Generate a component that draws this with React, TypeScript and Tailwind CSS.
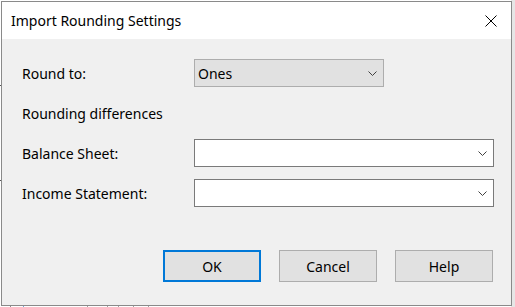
import React from "react";

const Chevron = () => (
  <svg width="9" height="5" viewBox="0 0 9 5" className="block">
    <path d="M0.5 0.5 L4.5 4.5 L8.5 0.5" fill="none" stroke="#404040" strokeWidth="1" />
  </svg>
);

export default function App() {
  const font = { fontFamily: '"Noto Sans", "Open Sans", sans-serif' };
  return (
    <div className="relative w-[515px] h-[307px] overflow-hidden bg-white" style={font}>
      {/* background app bits */}
      <div className="absolute left-0 top-[300px] w-[515px] h-[7px] bg-white">
        <div className="absolute left-[10px] top-0 w-px h-[7px] bg-[#8a8a8a]" />
        <div className="absolute left-[23px] top-0 w-px h-[7px] bg-[#6fa8dc]" />
        <div className="absolute left-[87px] top-0 w-px h-[7px] bg-[#a0a0a0]" />
        <div className="absolute left-[107px] top-0 w-px h-[7px] bg-[#a0a0a0]" />
        <div className="absolute left-[118px] top-0 w-px h-[7px] bg-[#a0a0a0]" />
        <div className="absolute left-[133px] top-0 w-px h-[7px] bg-[#a0a0a0]" />
        <div className="absolute left-[148px] top-0 w-px h-[7px] bg-[#a0a0a0]" />
      </div>
      <div className="absolute left-[511px] top-0 w-[4px] h-[307px] bg-[#e6e6e6]" />
      <div className="absolute left-0 top-[85px] w-[2px] h-px bg-[#555]" />
      <div className="absolute left-0 top-[180px] w-[2px] h-px bg-[#555]" />

      {/* dialog window */}
      <div className="relative ml-[1px] mt-[1px] w-[511px] h-[305px] border border-[#8a8a8a] bg-[#f0f0f0] flex flex-col">
        {/* title bar */}
        <div className="h-[37px] bg-white flex items-center justify-between pl-[9px] pr-[14px] shrink-0">
          <span className="text-[14px] text-black leading-none">Import Rounding Settings</span>
          <svg width="12" height="12" viewBox="0 0 12 12" className="block">
            <path d="M0.5 0.5 L11.5 11.5 M11.5 0.5 L0.5 11.5" stroke="#000" strokeWidth="1" />
          </svg>
        </div>

        {/* body */}
        <div className="flex flex-col pl-[20px] pr-[15px] pt-[20px] text-[14px] text-black">
          <div className="flex flex-col gap-[12px]">
            <div className="flex items-center h-[28px]">
              <div className="w-[172px]">Round to:</div>
              <div className="w-[190px] h-[28px] bg-[#e1e1e1] border border-[#adadad] flex items-center justify-between pl-[3px] pr-[6px]">
                <span>Ones</span>
                <Chevron />
              </div>
            </div>
            <div className="flex items-center h-[28px]">
              <div>Rounding differences</div>
            </div>
            <div className="flex items-center h-[28px]">
              <div className="w-[172px]">Balance Sheet:</div>
              <div className="w-[300px] h-[28px] bg-white border border-[#7a7a7a] flex items-center justify-end pr-[6px]">
                <Chevron />
              </div>
            </div>
            <div className="flex items-center h-[28px]">
              <div className="w-[172px]">Income Statement:</div>
              <div className="w-[300px] h-[28px] bg-white border border-[#7a7a7a] flex items-center justify-end pr-[6px]">
                <Chevron />
              </div>
            </div>
          </div>

          <div className="flex justify-end gap-[18px] mt-[43px] pr-[3px]">
            <div className="w-[98px] h-[32px] bg-[#e1e1e1] border-2 border-[#0078d7] flex items-center justify-center">OK</div>
            <div className="w-[98px] h-[32px] bg-[#e1e1e1] border border-[#adadad] flex items-center justify-center">Cancel</div>
            <div className="w-[98px] h-[32px] bg-[#e1e1e1] border border-[#adadad] flex items-center justify-center">Help</div>
          </div>
        </div>
      </div>
    </div>
  );
}
